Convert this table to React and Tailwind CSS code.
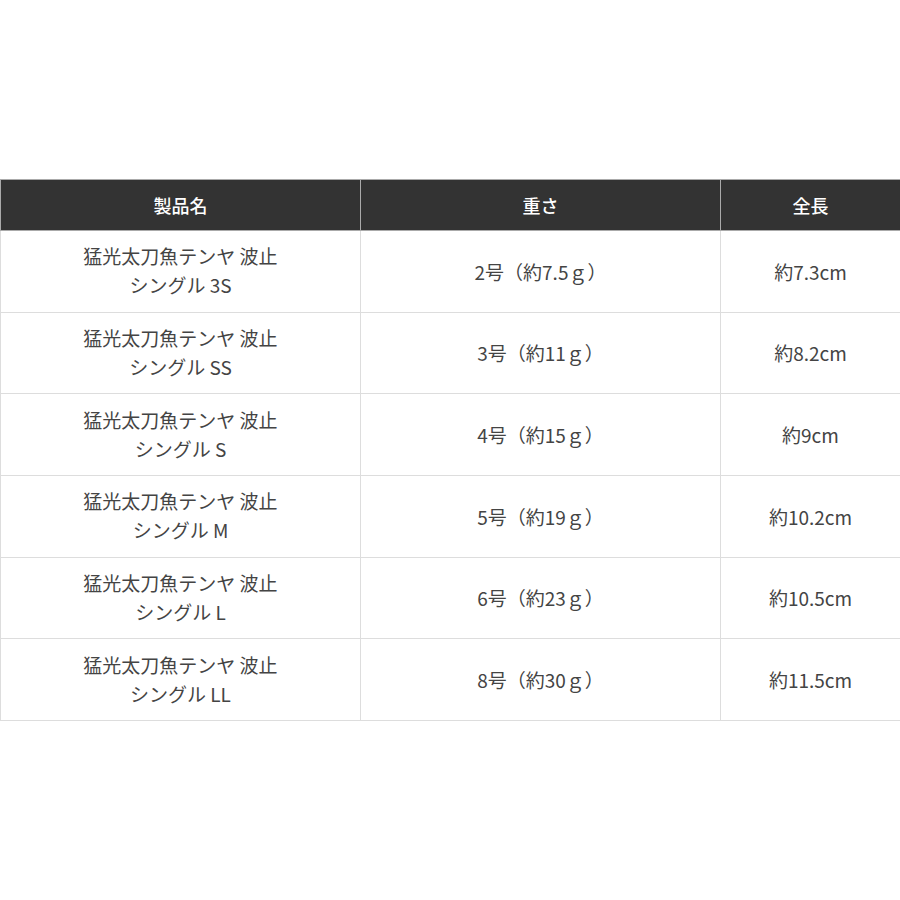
const rows = [
  ["シングル 3S", "2号（約7.5ｇ）", "約7.3cm"],
  ["シングル SS", "3号（約11ｇ）", "約8.2cm"],
  ["シングル S", "4号（約15ｇ）", "約9cm"],
  ["シングル M", "5号（約19ｇ）", "約10.2cm"],
  ["シングル L", "6号（約23ｇ）", "約10.5cm"],
  ["シングル LL", "8号（約30ｇ）", "約11.5cm"],
];

export default function App() {
  return (
    <div
      className="w-[900px] h-[900px] bg-white pt-[179px]"
      style={{ fontFamily: '"Noto Sans CJK JP", "Noto Sans", sans-serif' }}
    >
      <table className="w-[900px] border-collapse table-fixed text-[19px] text-[#444]">
        <colgroup>
          <col className="w-[360px]" />
          <col className="w-[360px]" />
          <col className="w-[180px]" />
        </colgroup>
        <thead>
          <tr className="h-[51px] bg-[#333] text-white text-[18px]">
            <th className="border border-[#aaa] font-medium text-center">製品名</th>
            <th className="border border-[#aaa] font-medium text-center">重さ</th>
            <th className="border border-[#aaa] font-medium text-center">全長</th>
          </tr>
        </thead>
        <tbody>
          {rows.map((r, i) => (
            <tr key={i} className="h-[81.67px]">
              <td className="border border-[#ddd] text-center leading-[29px] pb-[2px]">
                猛光太刀魚テンヤ 波止
                <br />
                {r[0]}
              </td>
              <td className="border border-[#ddd] text-center leading-[29px]">{r[1]}</td>
              <td className="border border-[#ddd] text-center leading-[29px]">{r[2]}</td>
            </tr>
          ))}
        </tbody>
      </table>
    </div>
  );
}
